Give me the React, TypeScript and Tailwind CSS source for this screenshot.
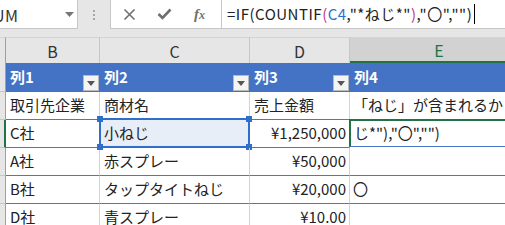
import React from "react";

type Row = {
	b: string;
	c: string;
	d: string;
	e: React.ReactNode;
	active?: boolean;
	dLeft?: boolean;
};

const font = "font-['Noto_Sans_CJK_JP',sans-serif]";

const rows: Row[] = [
	{ b: "取引先企業", c: "商材名", d: "売上金額", e: "「ねじ」が含まれるか", dLeft: true },
	{ b: "C社", c: "小ねじ", d: "¥1,250,000", e: 'じ*"),"〇","")', active: true },
	{ b: "A社", c: "赤スプレー", d: "¥50,000", e: "" },
	{ b: "B社", c: "タップタイトねじ", d: "¥20,000", e: "〇" },
	{ b: "D社", c: "青スプレー", d: "¥10.00", e: "" },
];

const FilterButton = () => (
	<div className="absolute right-[1px] bottom-[1px] w-[16px] h-[16px] bg-[#f4f4f4] border border-[#b9b9b9] flex items-center justify-center">
		<svg width="8" height="5" viewBox="0 0 8 5">
			<path d="M0 0 H8 L4 5 Z" fill="#555" />
		</svg>
	</div>
);

const Corner = ({ pos }: { pos: string }) => <div className={`absolute w-[6px] h-[6px] bg-[#2f6fcb] ${pos}`} />;

export default function App() {
	return (
		<div className={`w-[505px] h-[225px] overflow-hidden bg-white ${font} text-[15px] text-[#222]`}>
			{/* formula bar */}
			<div className="h-[37px] bg-[#e6e6e6] flex items-start">
				<div className="w-[78px] h-[29px] bg-white border-r border-b border-[#c6c6c6] relative overflow-hidden">
					<span className="absolute left-[-17px] top-[3px] text-[16px] text-[#333] tracking-[0.5px]">SUM</span>
					<svg className="absolute left-[65px] top-[12px]" width="9" height="5" viewBox="0 0 9 5">
						<path d="M0 0 H9 L4.5 5 Z" fill="#777" />
					</svg>
				</div>
				<div className="w-[32px] h-[29px] flex flex-col items-center justify-center gap-[2px]">
					<div className="w-[2px] h-[2px] bg-[#a8a8a8]" />
					<div className="w-[2px] h-[2px] bg-[#a8a8a8]" />
					<div className="w-[2px] h-[2px] bg-[#a8a8a8]" />
				</div>
				<div className="w-[112px] h-[29px] bg-white border-r border-b border-l border-[#c6c6c6] flex items-center">
					<svg className="ml-[12px]" width="13" height="13" viewBox="0 0 13 13">
						<path d="M1.5 1.5 L11.5 11.5 M11.5 1.5 L1.5 11.5" stroke="#6f6f6f" strokeWidth="1.6" />
					</svg>
					<svg className="ml-[21px]" width="15" height="12" viewBox="0 0 15 12">
						<path d="M1.5 6 L5.5 10 L13.5 1.5" stroke="#6f6f6f" strokeWidth="2.6" fill="none" />
					</svg>
					<span className="ml-[22px] font-['Liberation_Serif',serif] italic font-bold text-[15px] text-[#6f6f6f] leading-none">
						f<span className="text-[12px]">x</span>
					</span>
				</div>
				<div className="flex-1 h-[29px] bg-white border-b border-[#c6c6c6] flex items-center pl-[5px] whitespace-nowrap text-[15px] tracking-[0.5px] text-[#222]">
					<span>=IF(COUNTIF</span>
					<span className="text-[#c0398d]">(</span>
					<span className="text-[#2f6fcb]">C4</span>
					<span>,"*ねじ*"</span>
					<span className="text-[#c0398d]">)</span>
					<span>,"〇","")</span>
					<span className="ml-[2px] w-[1px] h-[20px] bg-black" />
				</div>
			</div>

			{/* sheet grid */}
			<div className="grid grid-cols-[6px_94px_150px_100px_178px] w-[528px]">
				{/* column headers */}
				<div className="h-[26px] bg-[#e6e6e6] border-r border-[#9f9f9f] border-t border-t-[#d4d4d4]" />
				{["B", "C", "D"].map((l) => (
					<div
						key={l}
						className="h-[26px] bg-[#e6e6e6] border-r border-[#c6c6c6] border-t border-t-[#d4d4d4] flex items-center justify-center text-[#333] text-[16px]"
					>
						{l}
					</div>
				))}
				<div className="h-[26px] bg-[#d2d2d2] border-t border-t-[#d4d4d4] border-b-2 border-b-[#217346] flex items-center justify-center text-[#217346] text-[16px]">
					E
				</div>

				{/* table header */}
				<div className="h-[29px] bg-[#e6e6e6] border-r border-[#9f9f9f] border-b border-b-[#c6c6c6]" />
				{["列1", "列2", "列3"].map((t) => (
					<div key={t} className="h-[29px] bg-[#4472c4] relative flex items-center pl-[4px] text-white font-bold">
						{t}
						<FilterButton />
					</div>
				))}
				<div className="h-[29px] bg-[#4472c4] flex items-center pl-[4px] text-white font-bold">列4</div>

				{/* body rows */}
				{rows.map((r, i) => (
					<React.Fragment key={i}>
						<div
							className={`h-[28px] bg-[#e6e6e6] border-b border-b-[#c6c6c6] border-r ${
								r.active ? "border-r-2 border-r-[#217346]" : "border-r-[#9f9f9f]"
							}`}
						/>
						<div className="h-[28px] border-r border-r-[#d4d4d4] border-b border-b-[#4a78c8] flex items-center pl-[4px] whitespace-nowrap">
							{r.b}
						</div>
						<div
							className={`h-[28px] relative border-r border-r-[#d4d4d4] border-b border-b-[#4a78c8] flex items-center pl-[4px] whitespace-nowrap ${
								r.active ? "bg-[#e8eef8]" : ""
							}`}
						>
							{r.c}
							{r.active && (
								<div className="absolute left-[-1px] top-[-2px] right-[-1px] bottom-[-1px] border-2 border-[#2f6fcb]">
									<Corner pos="left-[-4px] top-[-4px]" />
									<Corner pos="right-[-4px] top-[-4px]" />
									<Corner pos="left-[-4px] bottom-[-4px]" />
									<Corner pos="right-[-4px] bottom-[-4px]" />
								</div>
							)}
						</div>
						<div
							className={`h-[28px] border-r border-r-[#d4d4d4] border-b border-b-[#4a78c8] flex items-center whitespace-nowrap ${
								r.dLeft ? "justify-start pl-[4px]" : "justify-end pr-[3px]"
							}`}
						>
							{r.d}
						</div>
						<div
							className={`h-[28px] border-b border-b-[#4a78c8] flex items-center pl-[3px] whitespace-nowrap overflow-hidden ${
								r.active ? "border-2 border-[#217346] ml-[-1px] mt-[-1px]" : ""
							}`}
						>
							{r.e}
						</div>
					</React.Fragment>
				))}
			</div>
		</div>
	);
}
